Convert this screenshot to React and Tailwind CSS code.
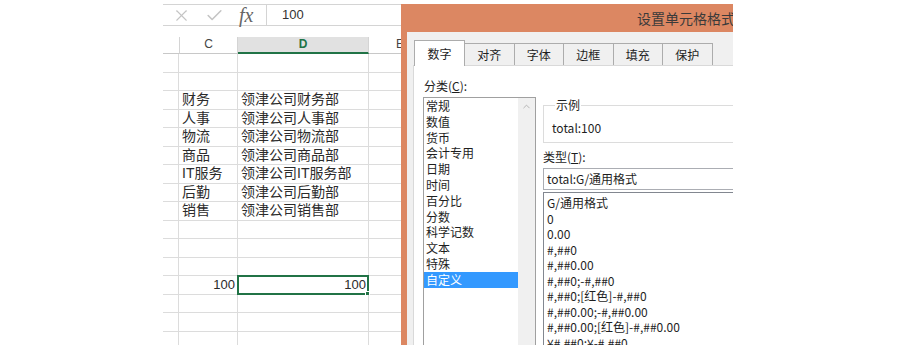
import { X, Check, ChevronUp } from 'lucide-react';

const sheetFont = "font-['Liberation_Sans','Noto_Sans_CJK_SC',sans-serif]";
const dlgFont = "font-['Noto_Sans_CJK_SC','Noto_Sans',sans-serif]";

const rows = [
  {}, {},
  { c: '财务', d: '领津公司财务部' },
  { c: '人事', d: '领津公司人事部' },
  { c: '物流', d: '领津公司物流部' },
  { c: '商品', d: '领津公司商品部' },
  { c: 'IT服务', d: '领津公司IT服务部' },
  { c: '后勤', d: '领津公司后勤部' },
  { c: '销售', d: '领津公司销售部' },
  {}, {}, {},
  { c: '100', d: '100', num: true, sel: true },
  {}, {}, {},
];

const categories = ['常规', '数值', '货币', '会计专用', '日期', '时间', '百分比', '分数', '科学记数', '文本', '特殊', '自定义'];

const formats = [
  'G/通用格式',
  '0',
  '0.00',
  '#,##0',
  '#,##0.00',
  '#,##0;-#,##0',
  '#,##0;[红色]-#,##0',
  '#,##0.00;-#,##0.00',
  '#,##0.00;[红色]-#,##0.00',
  '¥#,##0;¥-#,##0',
];

const tabs = ['数字', '对齐', '字体', '边框', '填充', '保护'];

function SheetRow({ row }) {
  return (
    <div className="flex h-[18.5px] border-b border-[#dcdcdc] text-[14px] text-[#2b2b2b] leading-[17px]">
      <div className="w-[16px] border-r border-[#dcdcdc]" />
      <div className={`w-[59px] border-r border-[#dcdcdc] px-[2px] whitespace-nowrap ${row.num ? 'text-right text-[13px]' : 'pl-[3px]'}`}>
        {row.c}
      </div>
      <div className={`relative w-[131px] border-r border-[#dcdcdc] px-[2px] whitespace-nowrap ${row.num ? 'text-right text-[13px]' : 'pl-[3px]'}`}>
        {row.d}
        {row.sel && (
          <div className="absolute -left-[1px] -top-[1px] -right-[1px] -bottom-[1px] border-2 border-[#217346]">
            <div className="absolute -right-[3px] -bottom-[3px] w-[5px] h-[5px] bg-[#217346] border border-white" />
          </div>
        )}
      </div>
      <div className="flex-1" />
    </div>
  );
}

function Sheet() {
  return (
    <div className={`${sheetFont} pt-[4px]`}>
      <div className="flex h-[22px] border-y border-[#d4d4d4]">
        <div className="w-[103px] flex items-center text-[#c4c4c4]">
          <X className="ml-[9px] w-[19px] h-[19px]" strokeWidth={1.4} />
          <Check className="ml-[14px] w-[19px] h-[19px]" strokeWidth={2} />
          <span className="ml-[15px] font-['Liberation_Serif',serif] italic text-[20px] text-[#666] leading-none">fx</span>
        </div>
        <div className="flex-1 border-l border-[#d4d4d4] pl-[15px] flex items-center text-[13px] text-[#333]">100</div>
      </div>
      <div className="mt-[11px] flex h-[17px] text-[12px] text-[#444] leading-[15px]">
        <div className="w-[16px] border-b border-[#c8c8c8]" />
        <div className="w-[59px] border-l border-r border-b border-[#d4d4d4] border-b-[#c8c8c8] text-center">C</div>
        <div className="w-[131px] bg-[#e1e1e1] border-r border-[#d4d4d4] border-b-2 border-b-[#217346] text-center font-bold text-[#217346]">D</div>
        <div className="w-[62px] border-b border-[#c8c8c8] text-center">E</div>
        <div className="flex-1 border-b border-[#c8c8c8]" />
      </div>
      {rows.map((r, i) => (
        <SheetRow key={i} row={r} />
      ))}
    </div>
  );
}

function Dialog() {
  return (
    <div className={`${dlgFont} absolute left-[238px] top-[4px] w-[420px] h-[400px] bg-[#dc8762] pl-[6px] flex flex-col`}>
      <div className="h-[28px] flex items-center pl-[230px] text-[14px] text-[#3a3a3a] whitespace-nowrap">设置单元格格式</div>
      <div className="flex-1 bg-[#f0f0f0] pl-[6px] flex flex-col text-[12px] text-[#1e1e1e]">
        <div className="h-[33px] flex items-end pl-[1px]">
          {tabs.map((t, i) =>
            i === 0 ? (
              <div key={t} className="relative z-10 w-[51px] h-[26px] -mb-[1px] bg-white border border-b-0 border-[#acacac] flex items-center justify-center">
                {t}
              </div>
            ) : (
              <div key={t} className="w-[49.5px] h-[22px] bg-[#f0f0f0] border border-l-0 border-b-0 border-[#acacac] flex items-center justify-center">
                {t}
              </div>
            )
          )}
        </div>
        <div className="flex-1 bg-white border-l border-t border-[#d9d9d9] flex">
          <div className="w-[122px] pl-[9px] pt-[12px]">
            <div className="h-[16px] leading-[16px] pl-[1px] whitespace-nowrap">
              分类(<span className="underline">C</span>):
            </div>
            <div className="mt-[3px] w-[113px] h-[300px] border border-[#a0a0a0] flex">
              <div className="flex-1 pt-[0px]">
                {categories.map((c) => (
                  <div
                    key={c}
                    className={`h-[15.8px] leading-[15.8px] pl-[2px] whitespace-nowrap ${c === '自定义' ? 'bg-[#3399ff] text-white' : ''}`}
                  >
                    {c}
                  </div>
                ))}
              </div>
              <div className="w-[17px] bg-[#f0f0f0] flex justify-center pt-[3px]">
                <ChevronUp className="w-[11px] h-[11px] text-[#b0b0b0]" strokeWidth={2} />
              </div>
            </div>
          </div>
          <div className="flex-1 ml-[7px] pt-[31px]">
            <fieldset className="h-[46px] border border-[#dcdcdc] pl-[8px]">
              <legend className="ml-[3px] px-[1px] leading-[16px]">示例</legend>
              <div className="mt-[7px] leading-[16px]">total:100</div>
            </fieldset>
            <div className="mt-[6px] h-[16px] leading-[16px] whitespace-nowrap">
              类型(<span className="underline">T</span>):
            </div>
            <div className="mt-[3px] h-[22px] border border-[#abadb3] pl-[3px] flex items-center whitespace-nowrap">total:G/通用格式</div>
            <div className="mt-[2px] h-[200px] border border-[#828790] pt-[2px] pl-[3px]">
              {formats.map((f) => (
                <div key={f} className="h-[15.5px] leading-[15.5px] whitespace-nowrap">
                  {f}
                </div>
              ))}
            </div>
          </div>
        </div>
      </div>
    </div>
  );
}

export default function App() {
  return (
    <div className="w-[900px] h-[345px] bg-white overflow-hidden">
      <div className="relative ml-[163px] w-[570px] h-[345px] overflow-hidden bg-white">
        <Sheet />
        <Dialog />
      </div>
    </div>
  );
}
